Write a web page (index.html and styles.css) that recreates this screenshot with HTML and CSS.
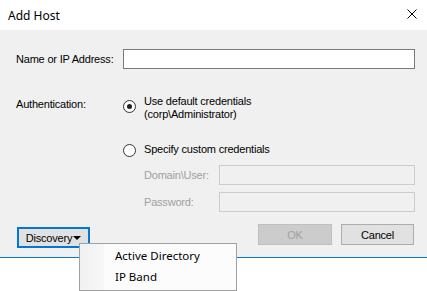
FILE: index.html
```html
<!DOCTYPE html>
<html lang="en">

<head>
    <meta charset="UTF-8">
    <title>Add Host</title>
    <link rel="stylesheet" href="styles.css">
</head>

<body>
    <div class="window">
        <div class="titlebar">
            <span class="title">Add Host</span>
            <svg class="close" width="10" height="10" viewBox="0 0 10 10">
                <path d="M0.5 0.5 L9.5 9.5 M9.5 0.5 L0.5 9.5" stroke="#000" stroke-width="1" fill="none" />
            </svg>
        </div>

        <div class="dialog">
            <div class="row name-row">
                <label class="field-label">Name or IP Address:</label>
                <input type="text" class="textbox">
            </div>

            <div class="auth">
                <div class="field-label auth-label">Authentication:</div>
                <div class="options">
                    <div class="option option-default">
                        <span class="radio checked"></span>
                        <span class="option-text">Use default credentials<br>(corp\Administrator)</span>
                    </div>
                    <div class="option option-custom">
                        <span class="radio"></span>
                        <span class="option-text">Specify custom credentials</span>
                    </div>
                    <div class="custom-fields">
                        <div class="sub-row">
                            <span class="sub-label">Domain\User:</span>
                            <input type="text" class="textbox disabled" disabled>
                        </div>
                        <div class="sub-row">
                            <span class="sub-label">Password:</span>
                            <input type="password" class="textbox disabled" disabled>
                        </div>
                    </div>
                </div>
            </div>

            <div class="buttons">
                <button class="btn btn-discovery">Discovery<span class="caret"></span></button>
                <button class="btn btn-ok" disabled>OK</button>
                <button class="btn btn-cancel">Cancel</button>
            </div>
        </div>

        <!-- menu dibuka dari tombol Discovery -->
        <div class="menu">
            <div class="menu-gutter"></div>
            <div class="menu-item">Active Directory</div>
            <div class="menu-item">IP Band</div>
        </div>
    </div>
</body>

</html>
```

FILE: styles.css
```css
* {
    margin: 0;
    padding: 0;
    box-sizing: border-box;
}

body {
    font-family: 'Liberation Sans', Arial, sans-serif;
    font-size: 11px;
    color: #000;
    background: #fff;
    width: 427px;
    height: 291px;
    overflow: hidden;
}

.window {
    position: relative;
    width: 427px;
}

.titlebar {
    height: 30px;
    display: flex;
    align-items: center;
    justify-content: space-between;
    padding: 0 10px 0 8px;
    background: #fff;
}

.title {
    font-family: 'Noto Sans', sans-serif;
    font-size: 12px;
}

.close {
    display: block;
    margin-top: -2px;
}

.dialog {
    height: 228px;
    background: #f0f0f0;
    border-bottom: 1px solid #0078d7;
    padding: 19px 12px 0 16px;
}

.field-label {
    width: 107px;
    flex-shrink: 0;
    letter-spacing: -0.2px;
}

.row {
    display: flex;
    align-items: center;
}

.textbox {
    height: 20px;
    flex: 1;
    border: 1px solid #7a7a7a;
    background: #fff;
    outline: none;
}

.textbox.disabled {
    border-color: #cccccc;
    background: #f0f0f0;
}

/* Bagian autentikasi */
.auth {
    display: flex;
    margin-top: 26px;
}

.auth-label {
    padding-top: 3px;
    line-height: 13px;
}

.options {
    flex: 1;
    display: flex;
    flex-direction: column;
}

.option {
    display: flex;
    align-items: flex-start;
    gap: 8px;
    letter-spacing: -0.2px;
    line-height: 13px;
}

.option-default .radio {
    margin-top: 5px;
}

.option-custom {
    margin-top: 22px;
}

.option-custom .radio {
    margin-top: 1px;
}

.radio {
    width: 13px;
    height: 13px;
    border: 1px solid #333;
    border-radius: 50%;
    background: #fff;
    flex-shrink: 0;
    display: flex;
    justify-content: center;
    align-items: center;
}

.radio.checked::after {
    content: '';
    width: 5px;
    height: 5px;
    border-radius: 50%;
    background: #222;
}

.custom-fields {
    margin-top: 8px;
    margin-left: 21px;
    display: flex;
    flex-direction: column;
    gap: 7px;
}

.sub-row {
    display: flex;
    align-items: center;
}

.sub-label {
    width: 75px;
    color: #a0a0a0;
    letter-spacing: -0.2px;
}

/* Tombol bawah */
.buttons {
    display: flex;
    align-items: flex-start;
    margin-top: 12px;
}

.btn {
    height: 21px;
    font-family: 'Liberation Sans', Arial, sans-serif;
    font-size: 11px;
    letter-spacing: -0.2px;
    background: #e1e1e1;
    border: 1px solid #adadad;
    color: #000;
}

.btn-discovery {
    width: 73px;
    margin-left: 1px;
    margin-top: 3px;
    border: 2px solid #0078d7;
    display: flex;
    align-items: center;
    justify-content: center;
}

.caret {
    width: 0;
    height: 0;
    border-left: 4px solid transparent;
    border-right: 4px solid transparent;
    border-top: 4px solid #000;
    margin-left: 1px;
    margin-top: 1px;
}

.btn-ok {
    width: 74px;
    margin-left: auto;
    background: #cccccc;
    border-color: #bfbfbf;
    color: #a0a0a0;
}

.btn-cancel {
    width: 73px;
    margin-left: 9px;
    margin-right: 1px;
}

/* Menu dropdown */
.menu {
    position: absolute;
    left: 79px;
    top: 243px;
    width: 158px;
    height: 48px;
    border: 1px solid #a0a0a0;
    background: #fcfcfc;
    padding-top: 1px;
    font-family: 'Noto Sans', sans-serif;
    font-size: 11.5px;
}

.menu-gutter {
    position: absolute;
    left: 0;
    top: 0;
    bottom: 0;
    width: 24px;
    background: linear-gradient(90deg, #f1f1f1, #f7f7f7);
}

.menu-item {
    position: relative;
    height: 21px;
    line-height: 21px;
    padding-left: 35px;
}
```
